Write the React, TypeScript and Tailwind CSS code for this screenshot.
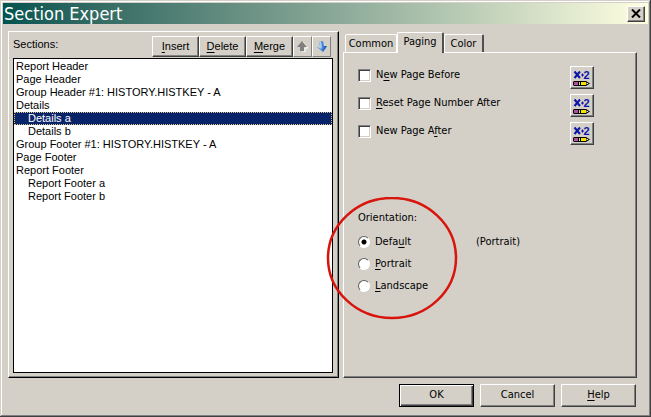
import React, { useState } from "react";
import clsx from "clsx";

const raised =
  "border border-t-white border-l-white border-r-[#404040] border-b-[#404040] shadow-[inset_-1px_-1px_#808080]";
const tahoma = "font-['DejaVu_Sans_Condensed','DejaVu_Sans',sans-serif] text-[11px]";
const msSans = "font-['Liberation_Sans',Arial,sans-serif] text-[11px]";

const SECTIONS = [
  { name: "Report Header", child: false },
  { name: "Page Header", child: false },
  { name: "Group Header #1: HISTORY.HISTKEY - A", child: false },
  { name: "Details", child: false },
  { name: "Details a", child: true },
  { name: "Details b", child: true },
  { name: "Group Footer #1: HISTORY.HISTKEY - A", child: false },
  { name: "Page Footer", child: false },
  { name: "Report Footer", child: false },
  { name: "Report Footer a", child: true },
  { name: "Report Footer b", child: true },
];

const OPTIONS = [
  { id: "before", label: "New Page Before", key: 1 },
  { id: "reset", label: "Reset Page Number After", key: 0 },
  { id: "after", label: "New Page After", key: 10 },
];

const ORIENTATIONS = [
  { id: "default", label: "Default", key: 4 },
  { id: "portrait", label: "Portrait", key: 0 },
  { id: "landscape", label: "Landscape", key: 0 },
];

// Label with its access key underlined
function Mnemonic({ text, at }: { text: string; at: number }) {
  return (
    <span className="whitespace-nowrap">
      {text.slice(0, at)}
      <span className="underline underline-offset-2">{text[at]}</span>
      {text.slice(at + 1)}
    </span>
  );
}

function FormulaIcon() {
  return (
    <svg width="20" height="18" viewBox="0 0 20 18" aria-hidden="true">
      <path d="M2.500 2.500l5.500 6.500M8 2.500L2.500 9" stroke="#0a14a8" strokeWidth="2" />
      <path d="M9 6h3M10.500 4.500v3" stroke="#0a14a8" strokeWidth="1" />
      <text x="11.500" y="10" fontSize="11" fontWeight="bold" fontFamily="Liberation Sans" fill="#0a14a8">2</text>
      <path d="M2 12h12l4 2.500-4 2.500H2l-1-1v-3z" fill="#000" />
      <path d="M2 13h4v3H2z" fill="#b0509a" />
      <path d="M7 13h1v3H7z" fill="#d0d0d0" />
      <path d="M9 13h5v3H9z" fill="#f4e400" />
      <path d="M14.500 13.500l2 1-2 1z" fill="#fff" />
    </svg>
  );
}

export default function App() {
  const [selected, setSelected] = useState("Details a");
  const [tab, setTab] = useState("Paging");
  const [orientation, setOrientation] = useState("default");

  return (
    <div className={clsx("flex min-h-screen flex-col overflow-hidden bg-[#d4d0c8] p-[3px] text-black shadow-[inset_-1px_-1px_#404040,inset_1px_1px_#d4d0c8,inset_-2px_-2px_#808080,inset_2px_2px_#fff]", tahoma)}>
      {/* Title bar */}
      <header className="flex h-[21px] items-center justify-between bg-linear-to-r from-[#005450] to-[#ffffe1] pr-[3px] pl-px">
        <h1 className="text-[18px] leading-5 text-white">Section Expert</h1>
        <button aria-label="Close" className={clsx("flex h-4 w-[18px] items-center justify-center bg-[#d4d0c8]", raised)}>
          <svg width="10" height="9" viewBox="0 0 10 9" aria-hidden="true">
            <path d="M1 .5l8 8M9 .5l-8 8" stroke="#000" strokeWidth="2" />
          </svg>
        </button>
      </header>

      <main className="grid flex-1 grid-cols-[331fr_294fr] gap-1 pt-[7px] pr-[11px] pl-[5px]">
        {/* Sections panel */}
        <section className="flex flex-col border border-t-white border-l-white border-r-black border-b-black p-1 pr-[5px] shadow-[inset_-1px_-1px_#808080]">
          <div className="flex h-[22px] items-start justify-between">
            <h2 id="sections" className={clsx("leading-4", msSans)}>Sections:</h2>
            <div className={clsx("flex pr-[2px]", msSans)}>
              {["Insert", "Delete", "Merge"].map((name) => (
                <button key={name} className={clsx("h-[21px] w-[47px]", raised)}>
                  <Mnemonic text={name} at={0} />
                </button>
              ))}
              <button aria-label="Move up" className="flex h-[21px] w-[19px] items-center justify-center border border-t-white border-l-white border-r-[#808080] border-b-[#808080]">
                <svg width="11" height="11" viewBox="0 0 11 11" aria-hidden="true">
                  <path d="M6 1l5 6H8v4H5" fill="none" stroke="#fff" />
                  <path d="M5 0l5 6H7v4H3V6H0z" fill="#808080" />
                </svg>
              </button>
              <button aria-label="Move down" className="flex h-[21px] w-[19px] items-center justify-center border border-t-white border-l-white border-r-[#808080] border-b-[#808080]">
                <svg width="10" height="11" viewBox="0 0 10 11" aria-hidden="true">
                  <path d="M2 1l4-1 1 5h3L6 11 0 6h3z" fill="#4a86d8" />
                  <path d="M2 1l2-.5L5 6l-1 2-4-2h3z" fill="#a9cbf4" />
                  <path d="M7 5h3L6 11z" fill="#2860b4" />
                </svg>
              </button>
            </div>
          </div>
          <ul role="listbox" aria-labelledby="sections" className={clsx("flex-1 border border-black bg-white pt-px", msSans)}>
            {SECTIONS.map((s) => (
              <li
                key={s.name}
                role="option"
                aria-selected={selected === s.name}
                onClick={() => setSelected(s.name)}
                className={clsx(
                  "h-[13px] leading-[13px] whitespace-nowrap",
                  s.child ? "pl-[14px]" : "pl-[2px]",
                  selected === s.name && "bg-[#0a246a] text-white outline-1 -outline-offset-1 outline-dotted outline-[#d8c890]"
                )}
              >
                {s.name}
              </li>
            ))}
          </ul>
        </section>

        {/* Tabbed panel */}
        <section className="flex flex-col">
          <div role="tablist" className="flex h-[21px] items-end pl-[2px]">
            {["Common", "Paging", "Color"].map((name) => (
              <button
                key={name}
                role="tab"
                aria-selected={tab === name}
                onClick={() => setTab(name)}
                className={clsx(
                  "rounded-t-xs border border-b-0 border-t-white border-l-white",
                  name === "Common" ? "w-[52px]" : name === "Paging" ? "w-[47px]" : "w-10",
                  tab === name
                    ? "z-10 -mb-px h-[21px] border-r-2 border-r-[#505050] bg-[#d4d0c8] pb-[2px]"
                    : "h-[18px] pt-px",
                  name === "Common" && "border-r-white",
                  name === "Color" && "border-r-2 border-r-[#505050]"
                )}
              >
                {name}
              </button>
            ))}
          </div>
          <div role="tabpanel" className="flex-1 border border-t-white border-l-white border-r-[#404040] border-b-[#404040] pt-[13px] pr-[42px] pl-[14px] shadow-[inset_-1px_-1px_#808080]">
            <div className="flex flex-col gap-[5px]">
              {OPTIONS.map((o) => (
                <div key={o.id} className="flex h-[23px] items-center justify-between">
                  <label className="flex items-center gap-[5px] pb-1">
                    <input type="checkbox" className="size-[13px] appearance-none border border-t-[#808080] border-l-[#808080] border-r-white border-b-white bg-white shadow-[inset_1px_1px_#404040,inset_-1px_-1px_#d4d0c8] checked:bg-[#0a246a]" />
                    <Mnemonic text={o.label} at={o.key} />
                  </label>
                  <button aria-label={`${o.label} formula`} className={clsx("flex h-[23px] w-6 items-center justify-center", raised)}>
                    <FormulaIcon />
                  </button>
                </div>
              ))}
            </div>

            <fieldset className="relative mt-[65px]">
              <legend className="h-[17px] leading-4">Orientation:</legend>
              <div className="flex flex-col gap-[6px] pt-[7px]">
                {ORIENTATIONS.map((o) => (
                  <div key={o.id} className="flex h-4 items-center">
                    <label className="flex w-[118px] items-center gap-[5px]">
                      <input
                        type="radio"
                        name="orientation"
                        checked={orientation === o.id}
                        onChange={() => setOrientation(o.id)}
                        className="size-3 appearance-none rounded-full border border-t-[#606060] border-l-[#606060] border-r-white border-b-white bg-white checked:bg-[radial-gradient(circle,#000_2px,#fff_3px)]"
                      />
                      <Mnemonic text={o.label} at={o.key} />
                    </label>
                    {o.id === "default" && <span>(Portrait)</span>}
                  </div>
                ))}
              </div>
              {/* Highlight ring */}
              <svg className="pointer-events-none absolute -top-[30px] -left-8 z-10" width="132" height="124" viewBox="0 0 132 124" aria-hidden="true">
                <ellipse cx="66" cy="61" rx="64" ry="60" fill="none" stroke="#d8140c" strokeWidth="2.500" />
              </svg>
            </fieldset>
          </div>
        </section>
      </main>

      <footer className="flex justify-end gap-[6px] pt-[6px] pr-3 pb-[7px]">
        <button className="h-[23px] w-[75px] border border-black shadow-[inset_1px_1px_#fff,inset_-1px_-1px_#404040,inset_-2px_-2px_#808080]">OK</button>
        <button className={clsx("h-[23px] w-[75px]", raised)}>Cancel</button>
        <button className={clsx("h-[23px] w-[75px]", raised)}>
          <Mnemonic text="Help" at={0} />
        </button>
      </footer>
    </div>
  );
}
